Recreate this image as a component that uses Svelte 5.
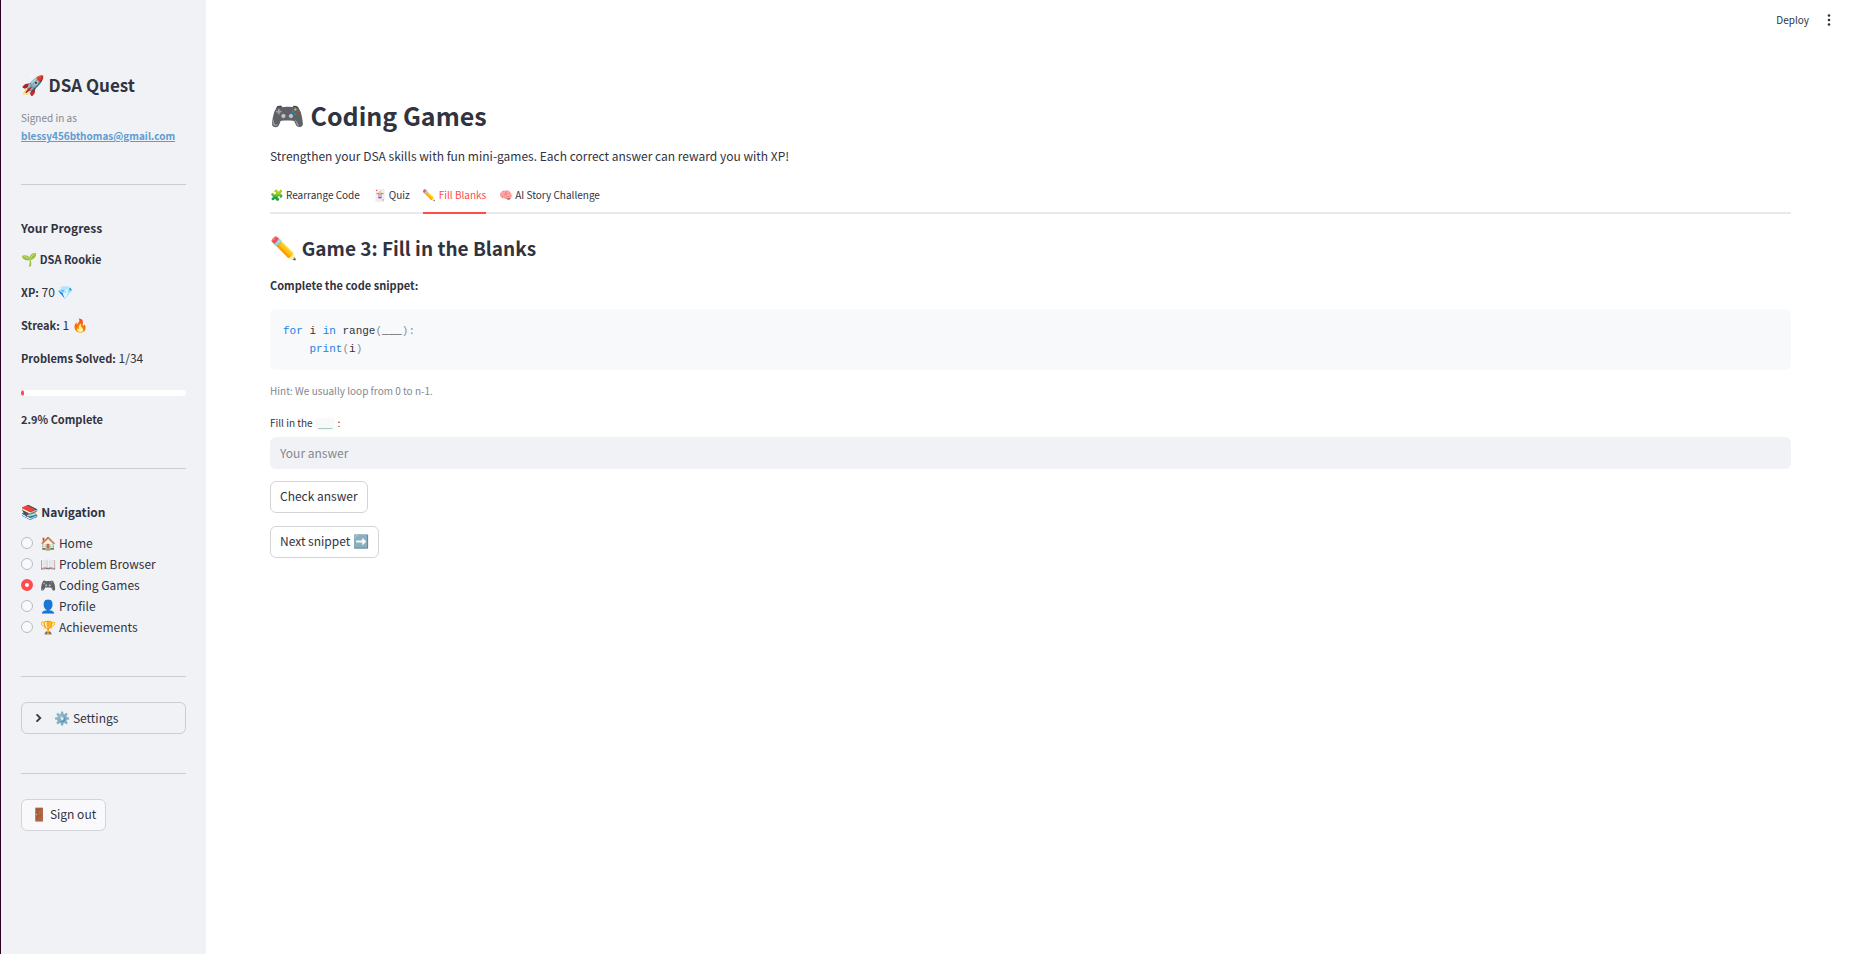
<script lang="ts">
    let page: string = "Coding Games"
    let tab: number = 2
    let answer: string = ""
    let solved: number = 1
    let total: number = 34

    const pages = [
        { icon: "🏠", name: "Home" },
        { icon: "📖", name: "Problem Browser" },
        { icon: "🎮", name: "Coding Games" },
        { icon: "👤", name: "Profile" },
        { icon: "🏆", name: "Achievements" }
    ]

    const tabs = [
        { icon: "🧩", name: "Rearrange Code" },
        { icon: "🃏", name: "Quiz" },
        { icon: "✏️", name: "Fill Blanks" },
        { icon: "🧠", name: "AI Story Challenge" }
    ]

    $: percent = (solved / total * 100).toFixed(1)
</script>


<div class="app">
    <aside class="sidebar">
        <h2 class="brand"><span class="emoji">🚀</span> DSA Quest</h2>
        <p class="caption">Signed in as<br><a href="mailto:blessy456bthomas@gmail.com">blessy456bthomas@gmail.com</a></p>

        <hr>

        <h3>Your Progress</h3>
        <div class="stats">
            <p><strong><span class="emoji">🌱</span> DSA Rookie</strong></p>
            <p><strong>XP:</strong> 70 <span class="emoji">💎</span></p>
            <p><strong>Streak:</strong> 1 <span class="emoji">🔥</span></p>
            <p><strong>Problems Solved:</strong> {solved}/{total}</p>
        </div>
        <div class="bar"><div class="fill" style="width: {percent}%"></div></div>
        <p><strong>{percent}% Complete</strong></p>

        <hr>

        <h3 id="nav-title"><span class="emoji">📚</span> Navigation</h3>
        <div class="nav" role="radiogroup" aria-labelledby="nav-title">
            {#each pages as item}
                <label>
                    <input type="radio" name="page" value={item.name} bind:group={page}>
                    <span><span class="emoji">{item.icon}</span> {item.name}</span>
                </label>
            {/each}
        </div>

        <hr>

        <details>
            <summary>
                <svg width="16" height="16" viewBox="0 0 24 24"><path d="M9.3 6 7.9 7.4l4.6 4.6-4.6 4.6L9.3 18l6-6z" fill="currentColor" stroke="currentColor"/></svg>
                <span><span class="emoji">⚙️</span> Settings</span>
            </summary>
        </details>

        <hr>

        <button class="btn"><span class="emoji">🚪</span> Sign out</button>
    </aside>

    <div class="content">
        <header>
            <button class="plain">Deploy</button>
            <button class="plain" aria-label="Menu">
                <svg width="16" height="16" viewBox="0 0 16 16" fill="currentColor"><circle cx="8" cy="3.5" r="1.3"/><circle cx="8" cy="8" r="1.3"/><circle cx="8" cy="12.5" r="1.3"/></svg>
            </button>
        </header>

        <main>
            <h1><span class="emoji">🎮</span> Coding Games</h1>
            <p>Strengthen your DSA skills with fun mini-games. Each correct answer can reward you with XP!</p>

            <div class="tabs" role="tablist">
                {#each tabs as item, i}
                    <button role="tab" aria-selected={tab === i} class="tab {tab === i ? "active" : ""}" on:click={() => tab = i}><span class="emoji">{item.icon}</span> {item.name}</button>
                {/each}
            </div>

            <h2><span class="emoji">✏️</span> Game 3: Fill in the Blanks</h2>
            <p class="task"><strong>Complete the code snippet:</strong></p>
            <pre><code><span class="key">for</span> i <span class="key">in</span> range<span class="punc">(</span>___<span class="punc">):</span>
    <span class="key">print</span><span class="punc">(</span>i<span class="punc">)</span></code></pre>
            <p class="caption">Hint: We usually loop from 0 to n-1.</p>

            <label class="field" for="answer">Fill in the <code>___</code> :</label>
            <input class="text" id="answer" type="text" placeholder="Your answer" bind:value={answer}>

            <div class="actions">
                <button class="btn">Check answer</button>
                <button class="btn">Next snippet <span class="emoji">➡️</span></button>
            </div>
        </main>
    </div>
</div>


<style>

    :global(body) {
        background: #ffffff;
    }

    .app {
        display: flex;
        min-height: 100vh;
        box-sizing: border-box;
        border-left: 1px solid #2c001e;
        color: #31333f;
        font-family: "Noto Sans CJK SC", "Noto Color Emoji", sans-serif;
        font-size: 12px;
        line-height: 20px;
    }

    .sidebar {
        width: 205px;
        flex-shrink: 0;
        box-sizing: border-box;
        padding: 72px 20px 40px;
        background: #f0f2f6;
    }

    h1, h2, h3, p {
        margin: 0;
    }

    strong {
        font-size: 11px;
    }

    .emoji {
        font-size: 13px;
        line-height: 1;
    }

    .caption {
        font-size: 10px;
        line-height: 18px;
        color: #85878f;
    }

    .sidebar .caption {
        margin-top: 11px;
    }

    .caption a {
        color: #5f9bd1;
        font-weight: 700;
    }

    hr {
        margin: 39px 0 25px;
        border: 0;
        border-top: 1px solid #cbcdd2;
    }

    h3 {
        margin-top: 31px;
        font-size: 12px;
        line-height: 24px;
    }

    h3 .emoji {
        font-size: 14px;
    }

    .stats {
        display: flex;
        flex-direction: column;
        gap: 13px;
        margin: 9px 0 22px;
    }

    .bar {
        height: 6px;
        margin-bottom: 13px;
        border-radius: 3px;
        background: #ffffff;
        overflow: hidden;
    }

    .fill {
        height: 6px;
        margin-left: -2px;
        border-radius: 3px;
        background: #ff4b4b;
    }

    .nav {
        margin-top: 8px;
    }

    .nav label {
        display: flex;
        align-items: center;
        gap: 7px;
        height: 21px;
    }

    input[type="radio"] {
        appearance: none;
        width: 12px;
        height: 12px;
        box-sizing: border-box;
        margin: 0;
        border: 1px solid #b9bbc2;
        border-radius: 50%;
        background: #f9f9fb;
    }

    input[type="radio"]:checked {
        border: 4px solid #ff4b4b;
        background: #ffffff;
    }

    details {
        border: 1px solid #cbcdd2;
        border-radius: 6px;
    }

    summary {
        display: flex;
        align-items: center;
        gap: 7px;
        height: 30px;
        padding-left: 9px;
        cursor: pointer;
    }

    button, .text {
        font: inherit;
        color: inherit;
        box-sizing: border-box;
    }

    .btn {
        height: 32px;
        padding: 0 9px 2px;
        border: 1px solid #d3d4d8;
        border-radius: 6px;
        background: #ffffff;
        cursor: pointer;
    }

    .sidebar .btn {
        background: #f9f9fb;
    }

    .content {
        flex: 1;
        min-width: 0;
    }

    header {
        display: flex;
        justify-content: flex-end;
        align-items: center;
        gap: 12px;
        height: 40px;
        padding-right: 13px;
    }

    .plain {
        display: flex;
        padding: 0;
        border: 0;
        background: none;
        font-size: 10px;
        cursor: pointer;
    }

    main {
        padding: 55px 59px 80px 64px;
    }

    h1 {
        font-size: 25px;
        line-height: 40px;
    }

    h1 .emoji {
        font-size: 28px;
    }

    h1 + p {
        margin-top: 11px;
    }

    .tabs {
        display: flex;
        gap: 13px;
        margin-top: 13px;
        border-bottom: 2px solid #e9e9ec;
    }

    .tab {
        height: 35px;
        margin-bottom: -2px;
        padding: 0 0 2px;
        border: 0;
        border-bottom: 2px solid transparent;
        background: none;
        font-size: 10px;
        cursor: pointer;
    }

    .tab .emoji {
        font-size: 11px;
    }

    .active {
        border-color: #ff4b4b;
        color: #ff4b4b;
    }

    h2 {
        margin-top: 19px;
        font-size: 19px;
        line-height: 30px;
    }

    h2 .emoji {
        font-size: 22px;
    }

    .brand {
        margin-top: 0;
        font-size: 17px;
        line-height: 26px;
    }

    .brand .emoji {
        font-size: 19px;
    }

    .task {
        margin-top: 12px;
    }

    pre {
        margin: 14px 0 12px;
        padding: 13px 13px 12px;
        border-radius: 6px;
        background: #f8f9fb;
        font-size: 11px;
        line-height: 18px;
    }

    code {
        font-family: "Liberation Mono", monospace;
    }

    .key {
        color: #1c83e1;
    }

    .punc {
        color: #8c8e96;
    }

    .field {
        display: block;
        margin: 14px 0 3px;
        font-size: 10px;
        line-height: 18px;
    }

    .field code {
        padding: 2px 3px;
        border-radius: 3px;
        background: #f8f9fb;
        color: #158237;
        font-family: "DejaVu Sans Mono", monospace;
        font-size: 8px;
    }

    .text {
        display: block;
        width: 100%;
        height: 32px;
        padding: 0 10px 2px;
        border: 0;
        border-radius: 6px;
        background: #f0f2f6;
    }

    .text::placeholder {
        color: #85878f;
    }

    .actions {
        display: flex;
        flex-direction: column;
        align-items: flex-start;
        gap: 13px;
        margin-top: 12px;
    }

</style>
